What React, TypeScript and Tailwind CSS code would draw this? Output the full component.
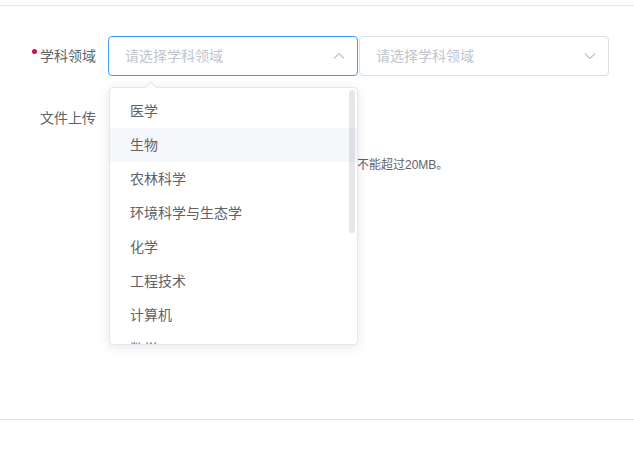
import React from 'react';

const items = ['医学', '生物', '农林科学', '环境科学与生态学', '化学', '工程技术', '计算机', '数学'];

function Chevron({ up }: { up?: boolean }) {
  return (
    <svg width="12" height="12" viewBox="0 0 12 12" className="shrink-0">
      <polyline
        points={up ? '1,8.5 6,3.5 11,8.5' : '1,3.5 6,8.5 11,3.5'}
        fill="none"
        stroke="#c0c4cc"
        strokeWidth="1.2"
      />
    </svg>
  );
}

export default function App() {
  return (
    <div className="w-[634px] h-[471px] bg-white overflow-hidden font-['Liberation_Sans','Noto_Sans_CJK_SC',sans-serif] text-[14px] text-[#606266]">
      <div className="h-[5px]" />
      <div className="h-[414px] border-t border-[#e8e8e8] pt-[30px] pl-[40px]">
        {/* 学科领域 */}
        <div className="flex items-center h-[40px]">
          <label className="relative w-[68px] shrink-0 leading-[40px]">
            <span className="absolute left-[-8px] top-[13px] w-[5px] h-[5px] rounded-full bg-[#c8104c]" />
            学科领域
          </label>
          <div className="relative w-[250px] h-[40px] shrink-0">
            <div className="flex items-center justify-between h-full border border-[#409eff] rounded-[4px] pl-[16px] pr-[12px]">
              <span className="text-[#c0c4cc]">请选择学科领域</span>
              <Chevron up />
            </div>
            {/* dropdown */}
            <div className="absolute z-10 left-[1px] top-[51px] w-[249px] h-[258px] bg-white border border-[#e4e7ed] rounded-[4px] shadow-[0_2px_12px_rgba(0,0,0,0.1)]">
              <div className="absolute left-[37px] top-[-5px] w-[8px] h-[8px] rotate-45 bg-white border-l border-t border-[#e4e7ed]" />
              <div className="h-full overflow-hidden rounded-[4px] relative">
                <ul className="pt-[6px]">
                  {items.map((it, i) => (
                    <li
                      key={it}
                      className={`h-[34px] leading-[34px] pl-[20px] pr-[32px] whitespace-nowrap ${i === 1 ? 'bg-[#f5f7fa]' : ''}`}
                    >
                      {it}
                    </li>
                  ))}
                </ul>
                <div className="absolute right-[2px] top-[2px] w-[6px] h-[143px] rounded-[3px] bg-[rgba(144,147,153,0.22)]" />
              </div>
            </div>
          </div>
          <div className="ml-[1px] w-[250px] h-[40px] shrink-0 flex items-center justify-between border border-[#dcdfe6] rounded-[4px] pl-[16px] pr-[12px]">
            <span className="text-[#c0c4cc]">请选择学科领域</span>
            <Chevron />
          </div>
        </div>

        {/* 文件上传 */}
        <div className="flex items-center h-[40px] mt-[22px]">
          <label className="w-[68px] shrink-0 leading-[40px]">文件上传</label>
        </div>
        <div className="flex ml-[68px] mt-[17px] text-[12px] leading-[20px] whitespace-nowrap">
          <span className="w-[249px] overflow-hidden invisible">单个文件</span>
          <span>不能超过20MB。</span>
        </div>
      </div>
      <div className="border-t border-[#e0e0e0]" />
    </div>
  );
}
